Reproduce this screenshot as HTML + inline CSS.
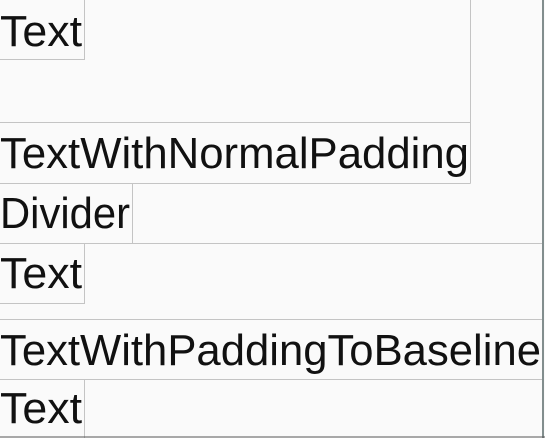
<!DOCTYPE html>
<html><head><style>
html,body{margin:0;padding:0;background:#fafafa;width:545px;height:438px;overflow:hidden}
svg{display:block}
text{font-family:"Liberation Sans",sans-serif;font-size:44px;fill:#111}
</style></head><body>
<svg width="545" height="438" viewBox="0 0 545 438">
<rect width="545" height="438" fill="#fafafa"/>
<g stroke="#c4c4c4" stroke-width="1" fill="none">
<path d="M0 59.5H84.5V0"/>
<path d="M470.5 0V183.5"/>
<path d="M0 122.5H470.5"/>
<path d="M0 183.5H470.5"/>
<path d="M132.5 183.5V243.5"/>
<path d="M0 243.5H542"/>
<path d="M84.5 243.5V303.5H0"/>
<path d="M0 319.5H542"/>
<path d="M0 379.5H542"/>
<path d="M84.5 379.5V438"/>
</g>
<path d="M543 0V438" stroke="#5a6a6a" stroke-width="1.5"/>
<path d="M0 437H545" stroke="#555" stroke-width="1"/>
<text x="0" y="46" textLength="82" lengthAdjust="spacingAndGlyphs">Text</text>
<text x="0" y="168" textLength="469" lengthAdjust="spacingAndGlyphs">TextWithNormalPadding</text>
<text x="0" y="228" textLength="130" lengthAdjust="spacingAndGlyphs">Divider</text>
<text x="0" y="288" textLength="82" lengthAdjust="spacingAndGlyphs">Text</text>
<text x="0" y="365" textLength="541" lengthAdjust="spacingAndGlyphs">TextWithPaddingToBaseline</text>
<text x="0" y="423" textLength="82" lengthAdjust="spacingAndGlyphs">Text</text>
</svg>
</body></html>
